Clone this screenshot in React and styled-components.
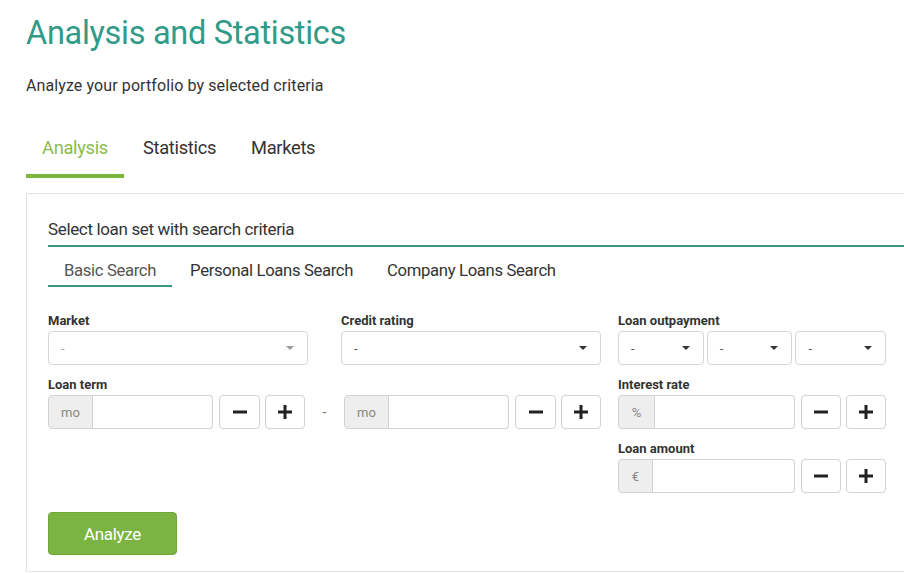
import React from "react";
import styled, { createGlobalStyle } from "styled-components";

const Global = createGlobalStyle`
  html, body { margin: 0; padding: 0; background: #fff; overflow: hidden; }
  body { font-family: Roboto, "Open Sans", Arial, sans-serif; color: #333; }
  * { box-sizing: border-box; }
`;

const Page = styled.div`
  padding: 13px 0 0 26px;
  width: 960px;
`;

const Title = styled.h1`
  margin: 0;
  font-size: 32.5px;
  line-height: 40px;
  font-weight: 400;
  color: #2f9b88;
  letter-spacing: -0.3px;
`;

const Subtitle = styled.p`
  margin: 23px 0 0;
  font-size: 16px;
  line-height: 20px;
  color: #333;
  letter-spacing: 0.1px;
`;

const Tabs = styled.div`
  display: flex;
  gap: 3px;
  margin-top: 40px;
`;

const Tab = styled.div`
  padding: 0 16px 14px;
  font-size: 18.3px;
  line-height: 24px;
  color: ${(p) => (p.$active ? "#8cbb4c" : "#333")};
  border-bottom: 4px solid ${(p) => (p.$active ? "#7db63d" : "transparent")};
  letter-spacing: -0.3px;
`;

const Panel = styled.div`
  margin-top: 15px;
  width: 904px;
  border: 1px solid #e4e4e4;
  border-right: none;
  padding: 24px 0 16px 21px;
`;

const PanelHeader = styled.div`
  font-size: 17px;
  line-height: 22px;
  padding-bottom: 5px;
  border-bottom: 2px solid #3c9484;
  color: #333;
  letter-spacing: -0.35px;
`;

const SubTabs = styled.div`
  display: flex;
  gap: 2px;
  margin-top: 13px;
`;

const SubTab = styled.div`
  padding: 0 16px 3px;
  font-size: 16.7px;
  line-height: 22px;
  color: ${(p) => (p.$active ? "#555" : "#333")};
  border-bottom: 2px solid ${(p) => (p.$active ? "#3c9484" : "transparent")};
  letter-spacing: -0.35px;
`;

const Form = styled.div`
  display: flex;
  gap: 17px;
  margin-top: 25px;
`;

const LeftArea = styled.div`
  width: 553px;
  display: flex;
  flex-direction: column;
  gap: 11px;
`;

const TwoCols = styled.div`
  display: grid;
  grid-template-columns: 260px 260px;
  column-gap: 33px;
`;

const RightArea = styled.div`
  width: 268px;
  display: flex;
  flex-direction: column;
  gap: 11px;
`;

const Field = styled.div`
  display: flex;
  flex-direction: column;
`;

const Label = styled.div`
  font-size: 13px;
  line-height: 18px;
  font-weight: 700;
  color: #333;
  margin-bottom: 1px;
`;

const SelectRow = styled.div`
  display: flex;
  gap: 3px;
`;

const SelectBox = styled.div`
  flex: ${(p) => p.$flex || 1};
  height: 34px;
  border: 1px solid #d6d6d6;
  border-radius: 4px;
  display: flex;
  align-items: center;
  justify-content: space-between;
  padding: 0 13px 0 12px;
  background: #fff;
`;

const SelectValue = styled.span`
  font-size: 13px;
  color: ${(p) => (p.$muted ? "#aaa" : "#555")};
`;

const Caret = styled.span`
  width: 0;
  height: 0;
  border-left: 4px solid transparent;
  border-right: 4px solid transparent;
  border-top: 4px solid ${(p) => (p.$muted ? "#999" : "#333")};
`;

const RangeRow = styled.div`
  display: flex;
  align-items: center;
`;

const Dash = styled.span`
  width: 39px;
  text-align: center;
  color: #777;
  font-size: 14px;
`;

const Stepper = styled.div`
  display: flex;
  width: ${(p) => p.$width}px;
`;

const InputGroup = styled.div`
  display: flex;
  flex: 1;
  height: 34px;
  margin-right: 6px;
`;

const Addon = styled.span`
  width: ${(p) => p.$width}px;
  display: flex;
  align-items: center;
  justify-content: center;
  background: #eee;
  border: 1px solid #d2d2d2;
  border-radius: 4px 0 0 4px;
  font-size: 13px;
  color: #888;
`;

const Input = styled.div`
  flex: 1;
  border: 1px solid #d2d2d2;
  border-left: none;
  border-radius: 0 4px 4px 0;
  background: #fff;
`;

const StepButton = styled.div`
  width: ${(p) => p.$width || 40}px;
  height: 34px;
  margin-left: ${(p) => p.$gap || 0}px;
  border: 1px solid #d2d2d2;
  border-radius: 4px;
  background: #fff;
  display: flex;
  align-items: center;
  justify-content: center;
  color: #222;
`;

const AnalyzeButton = styled.button`
  margin-top: 19px;
  width: 129px;
  height: 43px;
  border: 1px solid #6ea83a;
  border-radius: 4px;
  background: #7cb443;
  color: #fff;
  font-family: Roboto, "Open Sans", Arial, sans-serif;
  font-size: 17px;
  letter-spacing: -0.3px;
  cursor: pointer;
`;

const Minus = () => (
  <svg width="14" height="4" viewBox="0 0 14 4">
    <rect x="0" y="0.5" width="14" height="3" fill="#222" />
  </svg>
);

const Plus = () => (
  <svg width="14" height="14" viewBox="0 0 14 14">
    <rect x="0" y="5.5" width="14" height="3" fill="#222" />
    <rect x="5.5" y="0" width="3" height="14" fill="#222" />
  </svg>
);

function StepInput({ unit, unitWidth, width, firstBtn = 41 }) {
  return (
    <Stepper $width={width}>
      <InputGroup>
        <Addon $width={unitWidth}>{unit}</Addon>
        <Input />
      </InputGroup>
      <StepButton $width={firstBtn}>
        <Minus />
      </StepButton>
      <StepButton $gap={5}>
        <Plus />
      </StepButton>
    </Stepper>
  );
}

function Select({ muted, flex }) {
  return (
    <SelectBox $flex={flex}>
      <SelectValue $muted={muted}>-</SelectValue>
      <Caret $muted={muted} />
    </SelectBox>
  );
}

export default function App() {
  return (
    <>
      <Global />
      <Page>
        <Title>Analysis and Statistics</Title>
        <Subtitle>Analyze your portfolio by selected criteria</Subtitle>
        <Tabs>
          <Tab $active>Analysis</Tab>
          <Tab>Statistics</Tab>
          <Tab>Markets</Tab>
        </Tabs>
        <Panel>
          <PanelHeader>Select loan set with search criteria</PanelHeader>
          <SubTabs>
            <SubTab $active>Basic Search</SubTab>
            <SubTab>Personal Loans Search</SubTab>
            <SubTab>Company Loans Search</SubTab>
          </SubTabs>
          <Form>
            <LeftArea>
              <TwoCols>
                <Field>
                  <Label>Market</Label>
                  <SelectRow>
                    <Select muted />
                  </SelectRow>
                </Field>
                <Field>
                  <Label>Credit rating</Label>
                  <SelectRow>
                    <Select />
                  </SelectRow>
                </Field>
              </TwoCols>
              <Field>
                <Label>Loan term</Label>
                <RangeRow>
                  <StepInput unit="mo" unitWidth={45} width={257} />
                  <Dash>-</Dash>
                  <StepInput unit="mo" unitWidth={45} width={257} />
                </RangeRow>
              </Field>
            </LeftArea>
            <RightArea>
              <Field>
                <Label>Loan outpayment</Label>
                <SelectRow>
                  <Select flex={85} />
                  <Select flex={85} />
                  <Select flex={92} />
                </SelectRow>
              </Field>
              <Field>
                <Label>Interest rate</Label>
                <StepInput unit="%" unitWidth={37} width={268} firstBtn={40} />
              </Field>
              <Field>
                <Label>Loan amount</Label>
                <StepInput unit="€" unitWidth={35} width={268} firstBtn={40} />
              </Field>
            </RightArea>
          </Form>
          <AnalyzeButton>Analyze</AnalyzeButton>
        </Panel>
      </Page>
    </>
  );
}
